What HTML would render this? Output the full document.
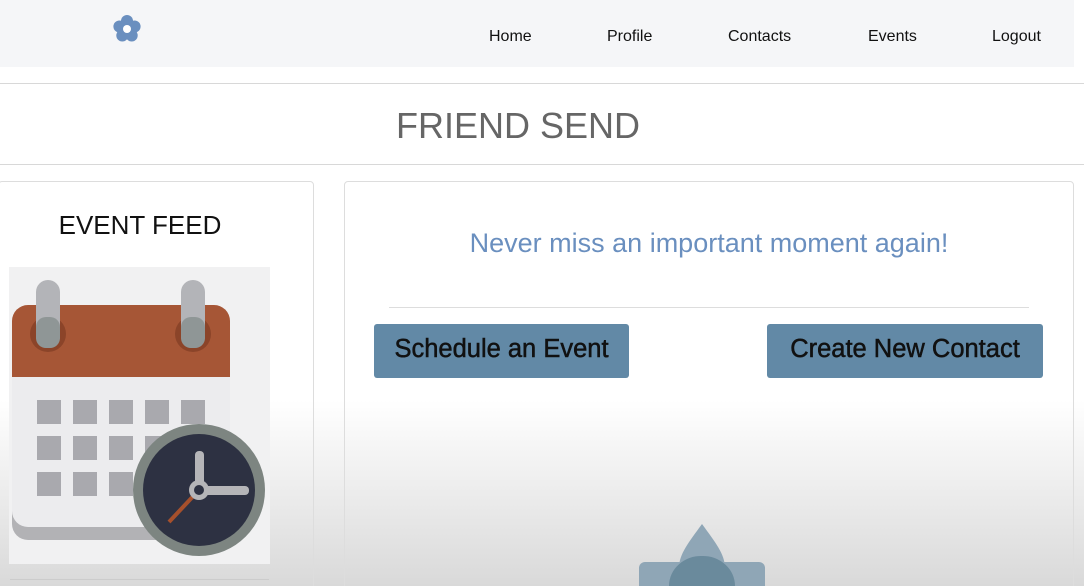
<!DOCTYPE html>
<html><head><meta charset="utf-8"><style>
*{margin:0;padding:0;box-sizing:border-box}
html{width:1084px;height:586px;overflow:hidden}
body{width:1084px;height:586px;overflow:hidden;position:relative;font-family:"Liberation Sans",sans-serif;background:linear-gradient(#fff 0,#fff 400px,#d9d9d9 586px)}
.nav{position:absolute;left:0;top:0;width:1074px;height:67px;background:#f5f6f8}
.nav a{position:absolute;top:28px;font-size:16px;color:#111;text-decoration:none}
.hr{position:absolute;left:0;width:1084px;height:1px;background:#d8d8d8}
.title{position:absolute;top:105px;left:0;width:1036px;text-align:center;font-size:36px;color:#666}
.card{position:absolute;top:181px;height:420px;border:1px solid #ddd;border-radius:4px}
.btn{position:absolute;top:324px;height:54px;background:#6289a6;border-radius:3px;color:#111;font-size:25.5px;-webkit-text-stroke:0.5px #111;line-height:50px;text-align:center}
</style></head><body>
<div style="position:absolute;left:0;top:67px;width:1084px;height:114px;background:#fff"></div>
<div class="nav">
<svg style="position:absolute;left:111px;top:13px" width="32" height="32" viewBox="0 0 32 32"><g fill="#6a8fbf"><circle cx="16" cy="8" r="6"/><circle cx="23.6" cy="13.5" r="6"/><circle cx="20.7" cy="22.5" r="6"/><circle cx="11.3" cy="22.5" r="6"/><circle cx="8.4" cy="13.5" r="6"/></g><circle cx="16" cy="16" r="4" fill="#fff"/></svg>
<a style="left:489px">Home</a><a style="left:607px">Profile</a><a style="left:728px">Contacts</a><a style="left:868px">Events</a><a style="left:992px">Logout</a>
</div>
<div class="hr" style="top:83px"></div>
<div class="title">FRIEND SEND</div>
<div class="hr" style="top:164px"></div>
<div class="card" style="left:-2px;width:316px">
<div style="position:absolute;top:28px;left:0;width:282px;text-align:center;font-size:26px;color:#111">EVENT FEED</div>
</div>
<svg style="position:absolute;left:9px;top:267px" width="261" height="297" viewBox="0 0 261 297">
<rect width="261" height="297" fill="#f1f1f2"/>
<rect x="3" y="105" width="218" height="168" rx="16" fill="#b2b2b5"/>
<rect x="3" y="60" width="218" height="200" rx="16" fill="#ececee"/>
<path d="M3 110V54a16 16 0 0 1 16-16h186a16 16 0 0 1 16 16v56z" fill="#a65636"/>
<circle cx="39" cy="67" r="18" fill="#8b4429"/><circle cx="184" cy="67" r="18" fill="#8b4429"/>
<rect x="27" y="13" width="24" height="68" rx="12" fill="#b3b4b8"/><rect x="172" y="13" width="24" height="68" rx="12" fill="#b3b4b8"/>
<rect x="27" y="50" width="24" height="31" rx="10" fill="#8f9696"/><rect x="172" y="50" width="24" height="31" rx="10" fill="#8f9696"/>
<g fill="#a9a9ae"><rect x="28" y="133" width="24" height="24"/><rect x="64" y="133" width="24" height="24"/><rect x="100" y="133" width="24" height="24"/><rect x="136" y="133" width="24" height="24"/><rect x="172" y="133" width="24" height="24"/>
<rect x="28" y="169" width="24" height="24"/><rect x="64" y="169" width="24" height="24"/><rect x="100" y="169" width="24" height="24"/><rect x="136" y="169" width="24" height="24"/>
<rect x="28" y="205" width="24" height="24"/><rect x="64" y="205" width="24" height="24"/><rect x="100" y="205" width="24" height="24"/></g>
<circle cx="190" cy="223" r="66" fill="#7d8581"/><circle cx="190" cy="223" r="56" fill="#2d3142"/>
<line x1="190" y1="223" x2="160" y2="255" stroke="#a6502c" stroke-width="4"/>
<rect x="186" y="184" width="9" height="42" rx="4" fill="#b5b5b8"/><rect x="190" y="219" width="50" height="9" rx="4" fill="#b5b5b8"/>
<circle cx="190" cy="223" r="10" fill="#b5b5b8"/><circle cx="190" cy="223" r="5" fill="#2d3142"/>
</svg>
<div style="position:absolute;left:10px;top:579px;width:259px;height:1px;background:#ccc"></div>
<div class="card" style="left:344px;width:730px">
<div style="position:absolute;top:46px;width:100%;text-align:center;font-size:27px;color:#6a8fbf">Never miss an important moment again!</div>
<div style="position:absolute;left:44px;top:125px;width:640px;height:1px;background:#ddd"></div>
</div>
<div class="btn" style="left:374px;width:255px">Schedule an Event</div>
<div class="btn" style="left:767px;width:276px">Create New Contact</div>
<svg style="position:absolute;left:637px;top:522px" width="130" height="64" viewBox="0 0 130 64">
<rect x="2" y="40" width="126" height="30" rx="6" fill="#8fa6b6"/>
<path d="M65 2C52 20 42 32 42 46a23 23 0 0 0 46 0C88 32 78 20 65 2z" fill="#8fa6b6"/>
<path d="M32 64a32 30 0 0 1 33-30a32 30 0 0 1 33 30z" fill="#6a8a9c"/>
</svg>
</body></html>
